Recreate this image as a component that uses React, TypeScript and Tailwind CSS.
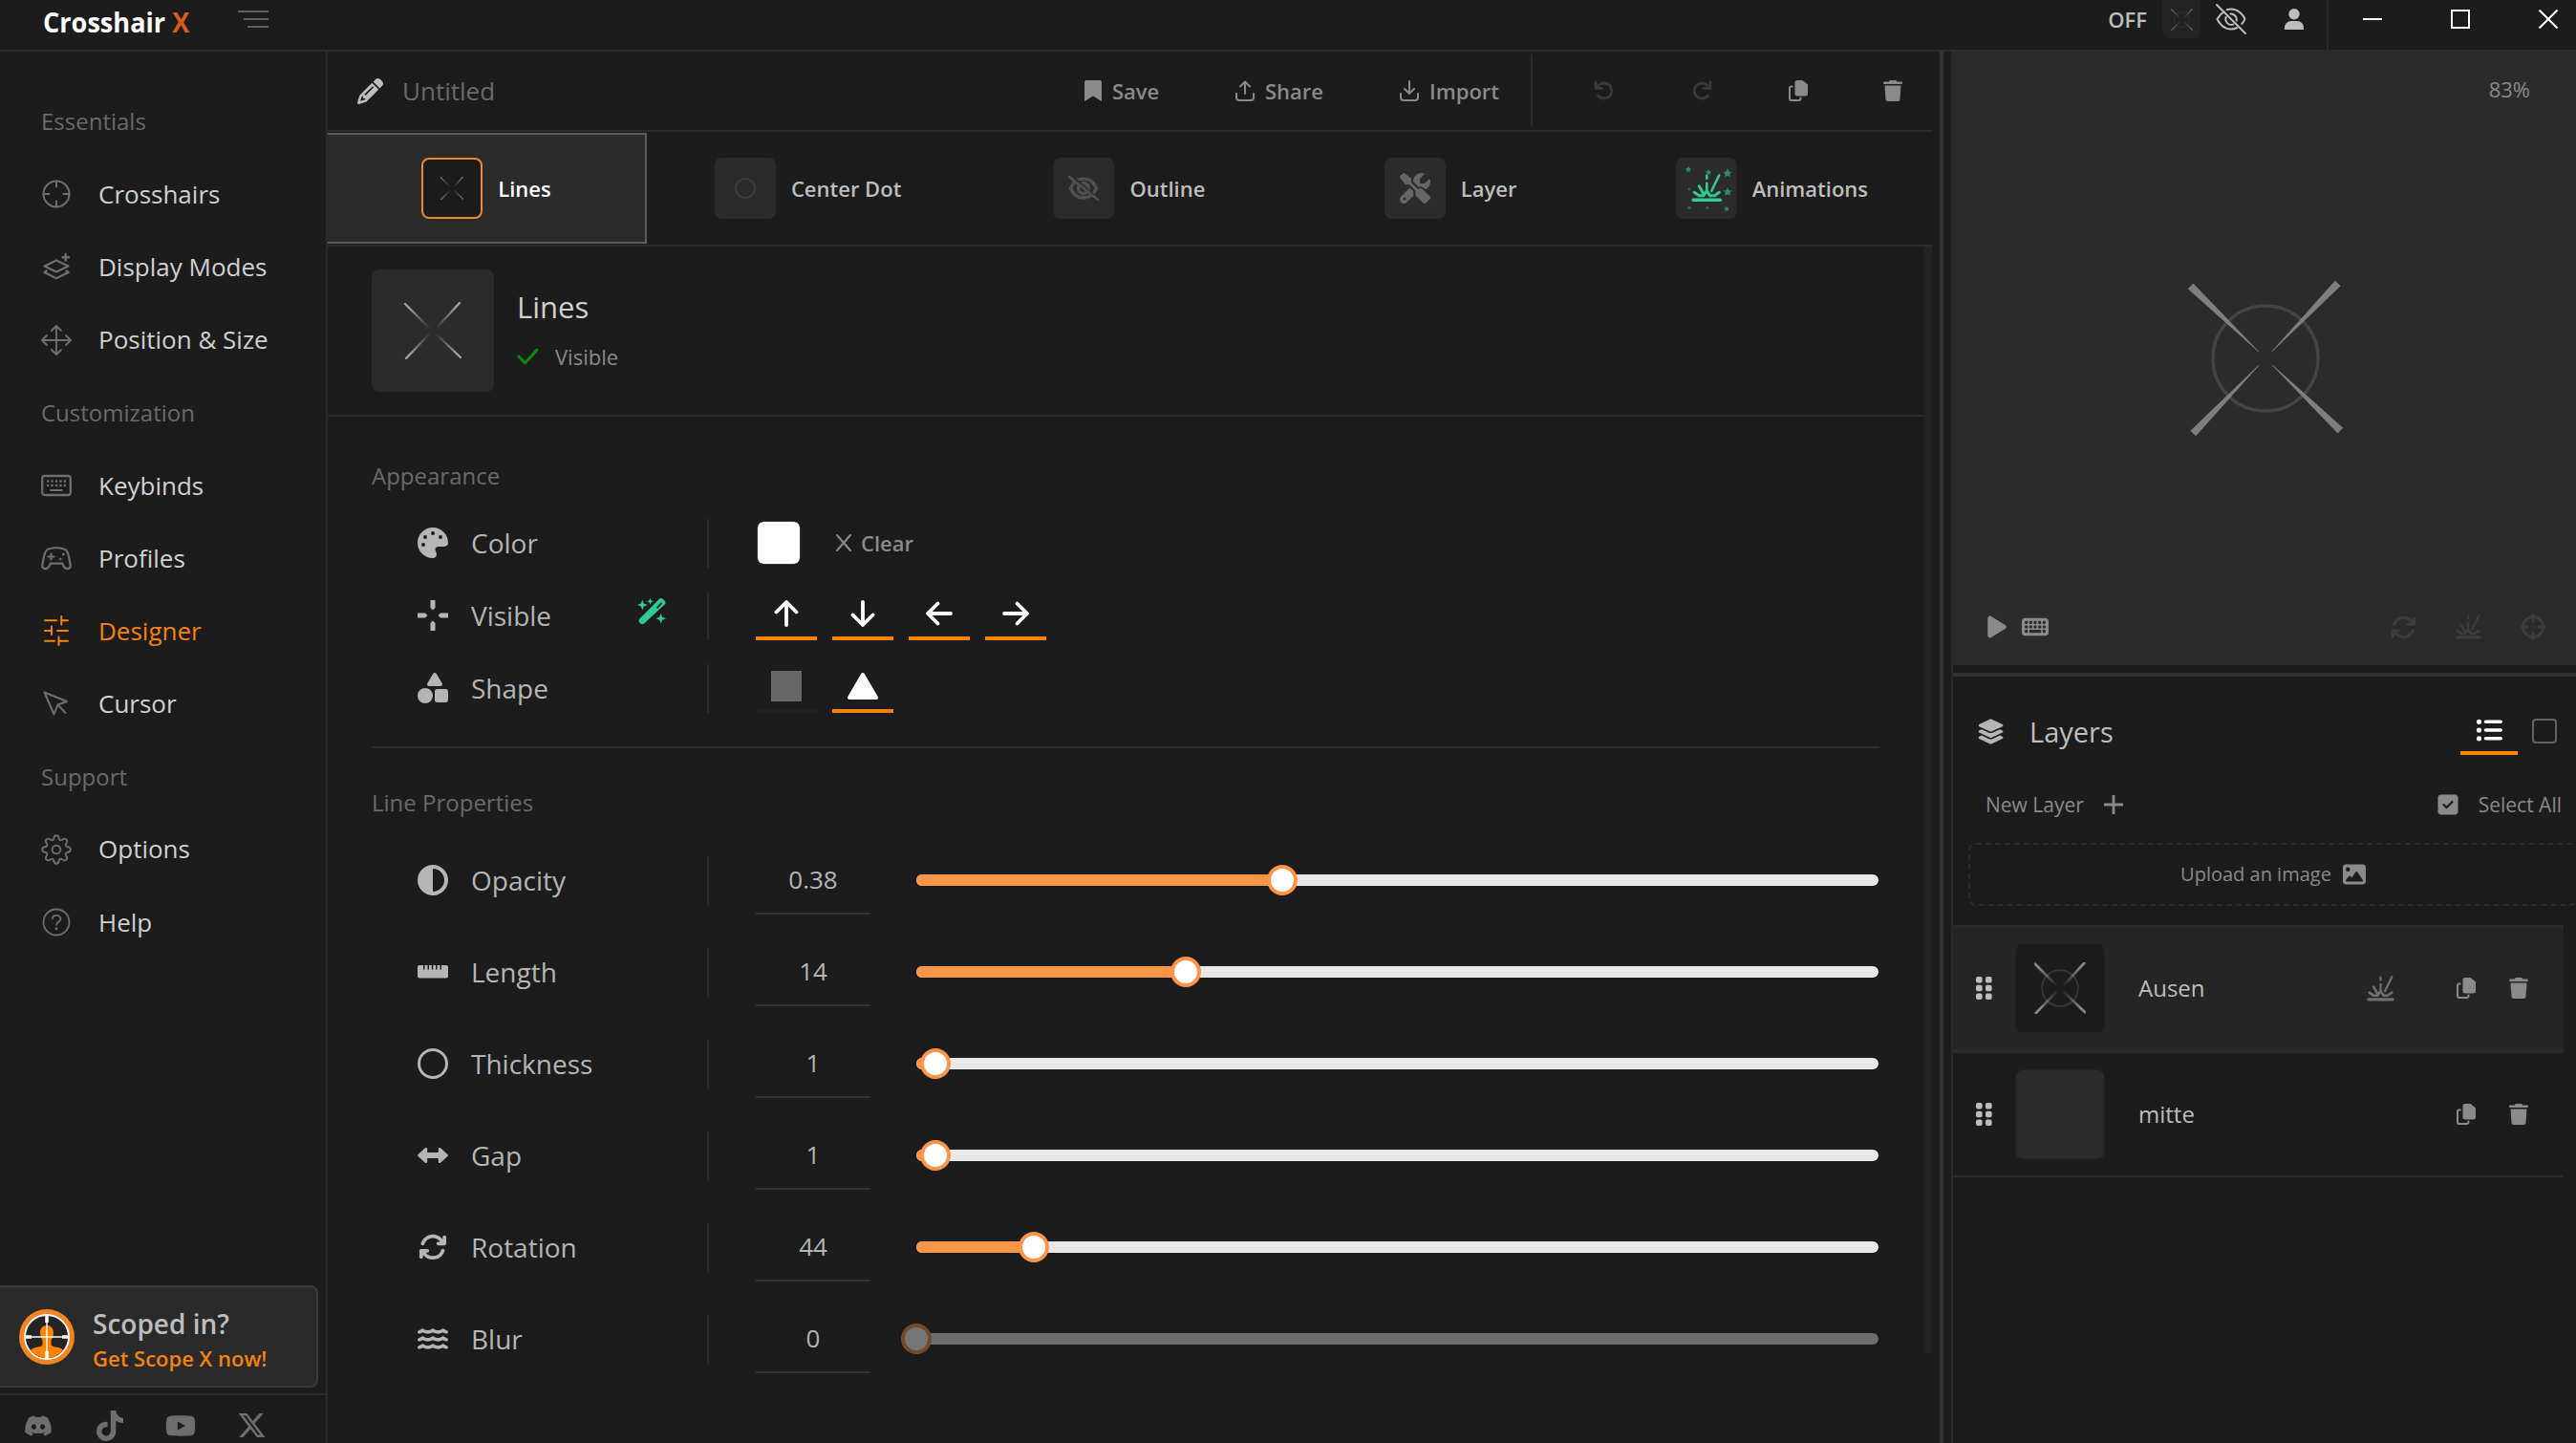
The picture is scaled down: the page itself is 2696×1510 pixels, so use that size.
import React from "react";
import {
  FaArrowsRotate,
  FaCircleHalfStroke,
  FaDiscord,
  FaImage,
  FaKeyboard,
  FaLayerGroup,
  FaListUl,
  FaPalette,
  FaPencil,
  FaPlay,
  FaScrewdriverWrench,
  FaShapes,
  FaSquareCheck,
  FaTiktok,
  FaWater,
  FaXTwitter,
  FaYoutube,
} from "react-icons/fa6";

type IconProps = { className?: string };

const line = {
  fill: "none",
  stroke: "currentColor",
  strokeWidth: 2,
  strokeLinecap: "round" as const,
  strokeLinejoin: "round" as const,
};

/* ---------- sidebar icons ---------- */

const CrosshairIcon = () => (
  <svg viewBox="0 0 32 32" className="size-8" {...line}>
    <circle cx="16" cy="16" r="13.5" />
    <path d="M16 2.5v6M16 23.5v6M2.5 16h6M23.5 16h6" />
  </svg>
);

const ModesIcon = () => (
  <svg viewBox="0 0 32 32" className="size-8" {...line} strokeWidth={2.4}>
    <path d="M16 9.5 28.500 15.500 16 21.5 3.500 15.500z" />
    <path d="M5.500 20.600 3.500 22 16 28.300 28.500 22l-2-1.400" />
    <path d="M25.700 3v6.500M22.500 6.200H29" />
  </svg>
);

const MoveIcon = () => (
  <svg viewBox="0 0 32 32" className="size-8" {...line} strokeWidth={1.9}>
    <path d="M16 1.500v29M1.500 16h29M11 6l5-5 5 5M11 26l5 5 5-5M6 11l-5 5 5 5M26 11l5 5-5 5" />
  </svg>
);

const KeyboardIcon = () => (
  <svg viewBox="0 0 32 32" className="size-8" {...line}>
    <rect x="1.200" y="6" width="29.600" height="20" rx="2.500" strokeWidth="2.300" />
    <path
      d="M6 11.500h2.200M10.400 11.500h2.200M14.900 11.500h2.200M19.400 11.500h2.200M23.800 11.500H26M6 16h2.200M10.400 16h2.200M14.900 16h2.200M19.400 16h2.200M23.800 16H26"
      strokeLinecap="butt"
      strokeWidth="2.300"
    />
    <path d="M10 21h12" />
  </svg>
);

const GamepadIcon = () => (
  <svg viewBox="0 0 32 32" className="size-8" {...line} strokeWidth={2.2}>
    <path d="M8 6.500Q16 4 24 6.500c2.500.5 4 3 5 8s1.800 9 1.800 9c0 2.500-1.500 3.700-3.300 3.700-2 0-3.200-1.200-4-3l-1.200-2.500H9.700L8.500 24.200c-.8 1.800-2 3-4 3-1.800 0-3.300-1.200-3.300-3.700 0 0 .8-4 1.800-9s2.500-7.500 5-8z" />
    <path d="M10.500 11.500v6M7.500 14.500h6" />
    <circle cx="23.300" cy="12" r="1" fill="currentColor" strokeWidth="1" />
    <circle cx="20" cy="17" r="1" fill="currentColor" strokeWidth="1" />
  </svg>
);

const SlidersIcon = () => (
  <svg viewBox="0 0 32 32" className="size-8" {...line}>
    <path d="M4 5.300h12M21.300 1v8.500M21.300 5.300H28M4 16h7M11 11.500V20M17 16h11M4 26.700h10M18.500 22.500V31M18.500 26.700H28" />
  </svg>
);

const CursorIcon = () => (
  <svg viewBox="0 0 32 32" className="size-8" {...line} strokeLinecap="butt">
    <path d="M3.500 3.500 27 13l-9.500 3.500-4 10z" />
    <path d="m18.500 17.500 7.500 8" />
  </svg>
);

const GearIcon = () => (
  <svg viewBox="0 0 32 32" className="size-8" {...line} strokeWidth={1.9}>
    <path d="M13.200 4.500c.3-2.200 1.200-3.300 2.800-3.300s2.500 1.100 2.800 3.300c.3 1.600 1.800 2.200 3.200 1.300 1.800-1.400 3.300-1.500 4.400-.4s1 2.600-.3 4.400c-.9 1.300-.2 2.900 1.400 3.200 2.200.3 3.300 1.400 3.300 3s-1.100 2.700-3.300 3c-1.600.3-2.300 1.900-1.400 3.200 1.300 1.800 1.400 3.300.3 4.400s-2.600 1-4.400-.4c-1.400-.9-2.900-.3-3.200 1.300-.3 2.200-1.200 3.300-2.800 3.300s-2.500-1.100-2.800-3.300c-.3-1.600-1.800-2.200-3.200-1.300-1.800 1.400-3.300 1.500-4.400.4s-1-2.600.3-4.400c.9-1.300.2-2.900-1.400-3.200-2.200-.3-3.300-1.400-3.300-3s1.100-2.700 3.300-3c1.600-.3 2.300-1.900 1.400-3.200-1.300-1.800-1.400-3.300-.3-4.400s2.600-1 4.400.4c1.400.9 2.900.3 3.200-1.300z" />
    <circle cx="16" cy="16" r="4.300" />
  </svg>
);

const HelpIcon = () => (
  <svg viewBox="0 0 32 32" className="size-8" {...line} strokeWidth={1.8}>
    <circle cx="16" cy="16" r="13.500" />
    <path d="M11.700 12.500c.3-2.300 2-3.700 4.300-3.700 2.500 0 4.400 1.500 4.400 3.800 0 3-4.400 3.300-4.400 6.200" />
    <circle cx="16" cy="22.700" r=".6" fill="currentColor" />
  </svg>
);

const ScopeLogo = () => (
  <svg viewBox="0 0 58 58" className="size-[58px]">
    <circle cx="29" cy="29" r="29" fill="#f5831f" />
    <circle cx="29" cy="29" r="23" fill="#242424" stroke="#fff" strokeWidth="1.800" />
    <path
      d="M29 17c4.500 0 7 3.300 7 7.500 0 3-1.500 6-2.500 8v3.500c0 3 3 3.500 7 4 3 .5 4.500 1.500 5.500 3a22 22 0 0 1-34 0c1-1.500 2.500-2.500 5.500-3 4-.5 7-1 7-4v-3.500c-1-2-2.500-5-2.500-8 0-4.200 2.500-7.500 7-7.500z"
      fill="#ff8300"
    />
    <path d="M29 6v46M6 29h46" stroke="#fff" strokeWidth="1.400" />
    <path d="M29 7v7M29 44v7M6 29h7M45 29h7" stroke="#fff" strokeWidth="3.500" />
  </svg>
);

/* ---------- shared icons ---------- */

const CopyIcon = ({ className }: IconProps) => (
  <svg viewBox="0 0 20 22" className={className} fill="currentColor">
    <path d="M9 0h5.500L20 4.500V14a2.500 2.500 0 0 1-2.500 2.500H9A2.500 2.500 0 0 1 6.500 14V2.500A2.500 2.500 0 0 1 9 0z" />
    <path
      d="M4.500 6.500H2.700A1.700 1.700 0 0 0 1 8.200v11A1.700 1.700 0 0 0 2.700 21h8a1.700 1.700 0 0 0 1.700-1.700v-1.500"
      fill="none"
      stroke="currentColor"
      strokeWidth="2"
    />
  </svg>
);

const TrashIcon = ({ className }: IconProps) => (
  <svg viewBox="0 0 20 22" className={className} fill="currentColor">
    <path d="M6.700 0h6.600l.9 1.400h4.600c.7 0 1.200.5 1.200 1.300s-.5 1.400-1.200 1.400H1.200C.5 4.100 0 3.500 0 2.700s.5-1.300 1.200-1.300h4.600zM1.500 5.500h17l-1 14.500a2.100 2.100 0 0 1-2.100 2H4.600a2.100 2.100 0 0 1-2.100-2z" />
  </svg>
);

const BurstPaths = () => (
  <>
    <path d="M2 28.500h28" strokeWidth="3.600" />
    <path d="M16 3v3M16 11v9M29 2.500 21 19" strokeWidth="2.600" />
    <path d="M8 14l4.500 8M2.800 20.500 8 24h4.500l3.500-5 3.500 5H24l5-3.500" strokeWidth="3" />
  </>
);

const BurstIcon = ({ className }: IconProps) => (
  <svg viewBox="0 0 32 32" className={className} {...line}>
    <BurstPaths />
  </svg>
);

const WandIcon = () => (
  <svg viewBox="0 0 30 28" className="h-7 w-[30px]" fill="currentColor">
    <path
      d="M22.500 1.200 2.500 21.500a3 3 0 0 0 0 4.200l.6.600a3 3 0 0 0 4.200 0L28.500 6.800a3 3 0 0 0 0-4.200l-1.400-1.400a3.200 3.200 0 0 0-4.600 0zM20 9.500l5-5.300 1.200 1.200-4.900 5.500z"
      fillRule="evenodd"
    />
    <path d="m5.300 1.500 1.500 4 4 1.500-4 1.500-1.500 4-1.500-4L0 7l3.800-1.500zM13.500 0l1 2.300 2.500 1-2.500 1-1 2.500-1-2.500-2.500-1 2.500-1zM24.700 16l1.400 3.700 3.900 1.500-3.900 1.500-1.400 3.800-1.400-3.800-3.800-1.500 3.800-1.500z" />
  </svg>
);

const RulerIcon = () => (
  <svg viewBox="0 0 32 32" className="size-8" fill="currentColor">
    <path d="M2 9h4v4.500h1.500V9h3v4.500H12V9h2.800v4.500h1.500V9H19v4.500h1.500V9h3v4.500H25V9h5a2 2 0 0 1 2 2v9.500a2 2 0 0 1-2 2H2a2 2 0 0 1-2-2V11a2 2 0 0 1 2-2z" />
  </svg>
);

const GapIcon = () => (
  <svg viewBox="0 0 32 32" className="size-8" fill="currentColor">
    <path d="m.6 15 7.400-6.700c1-.8 2.200-.2 2.200 1V13h11.600V9.300c0-1.200 1.200-1.800 2.200-1l7.400 6.700c.7.600.7 1.400 0 2L24 23.700c-1 .8-2.200.2-2.200-1V19H10.200v3.700c0 1.200-1.200 1.800-2.200 1L.6 17c-.7-.6-.7-1.400 0-2z" />
  </svg>
);

const PlusGapIcon = () => (
  <svg viewBox="0 0 32 32" className="size-8" fill="currentColor">
    <path d="M13.500 0h5v8L16 10.500 13.500 8zM13.500 32h5v-8L16 21.500 13.500 24zM0 13.500v5h8l2.500-2.500L8 13.500zM32 13.500v5h-8L21.500 16l2.500-2.500z" />
  </svg>
);

const EyeSlashIcon = ({ className }: IconProps) => (
  <svg viewBox="0 0 32 32" className={className} {...line}>
    <path d="M8.500 8.200C5 10.600 2.500 14 1.500 16c2 4.500 7 10.500 14.500 10.500 2.300 0 4.500-.6 6.300-1.500M11.500 6.200C13 5.700 14.500 5.500 16 5.500c7.500 0 12.500 6 14.500 10.500-.6 1.500-1.700 3.200-3.200 4.900" />
    <path d="M10.600 14a6 6 0 0 0 7.500 7.600M15.500 10.500a6 6 0 0 1 6.200 7M1 1l30 30" />
  </svg>
);

const TargetIcon = ({ className }: IconProps) => (
  <svg viewBox="0 0 28 28" className={className} {...line} strokeWidth={3}>
    <circle cx="14" cy="14" r="10.500" />
    <path d="M14 2v6M14 20v6M2 14h6M20 14h6" />
    <circle cx="14" cy="14" r=".5" />
  </svg>
);

const ArrowIcon = ({ turn }: { turn: string }) => (
  <svg viewBox="0 0 28 28" className={`size-7 ${turn}`} {...line} strokeWidth={3.8}>
    <path d="M14 26V2.500M3.500 12.500 14 2l10.500 10.500" />
  </svg>
);

type SightProps = {
  className?: string;
  lines?: string;
  ring?: string;
  width?: number;
};

// small version of the sight: four strokes fading to the middle, plus optional ring
const Sight = ({ className, lines = "#8a8a8a", ring, width = 3 }: SightProps) => {
  const id = `fade${lines.slice(1)}${width * 10}`;
  return (
    <svg viewBox="0 0 60 60" className={className} fill="none">
      <defs>
        <radialGradient id={id} gradientUnits="userSpaceOnUse" cx="30" cy="30" r="38">
          <stop offset="0.1" stopColor={lines} stopOpacity="0" />
          <stop offset="0.9" stopColor={lines} />
        </radialGradient>
      </defs>
      {ring && <circle cx="30" cy="30" r="21" stroke={ring} strokeWidth="2" />}
      <path
        d="M1 2l25 25M58 1 34 27M2 59l24-25M59 58 34 34"
        stroke={`url(#${id})`}
        strokeWidth={width}
        strokeLinecap="round"
      />
    </svg>
  );
};

/* ---------- data ---------- */

const menu = [
  { title: "Essentials" },
  { label: "Crosshairs", icon: <CrosshairIcon /> },
  { label: "Display Modes", icon: <ModesIcon /> },
  { label: "Position & Size", icon: <MoveIcon /> },
  { title: "Customization" },
  { label: "Keybinds", icon: <KeyboardIcon /> },
  { label: "Profiles", icon: <GamepadIcon /> },
  { label: "Designer", icon: <SlidersIcon />, active: true },
  { label: "Cursor", icon: <CursorIcon /> },
  { title: "Support" },
  { label: "Options", icon: <GearIcon /> },
  { label: "Help", icon: <HelpIcon /> },
];

const properties = [
  { label: "Opacity", value: "0.38", percent: 38, icon: <FaCircleHalfStroke className="size-8" /> },
  { label: "Length", value: "14", percent: 28, icon: <RulerIcon /> },
  {
    label: "Thickness",
    value: "1",
    percent: 2,
    icon: (
      <svg viewBox="0 0 32 32" className="size-8" {...line} strokeWidth={3}>
        <circle cx="16" cy="16" r="14.500" />
      </svg>
    ),
  },
  { label: "Gap", value: "1", percent: 2, icon: <GapIcon /> },
  { label: "Rotation", value: "44", percent: 12.2, icon: <FaArrowsRotate className="size-[30px]" /> },
  { label: "Blur", value: "0", percent: 0, disabled: true, icon: <FaWater className="size-8" /> },
];

/* ---------- layout parts ---------- */

const Header = () => (
  <header className="flex h-[54px] shrink-0 border-b-2 border-[#2b2b2b]">
    <div className="flex w-[249px] shrink-0 pt-[3px] pl-[45px]">
      <h1 className="origin-left scale-x-[0.935] text-[29px] leading-10 font-bold whitespace-nowrap text-white">
        Crosshair <span className="text-[#d95b20]">X</span>
      </h1>
    </div>
    <div className="flex w-8 flex-col items-end gap-1.5 pt-[11px]">
      <div className="h-0.5 w-8 bg-[#5e5e5e]" />
      <div className="h-0.5 w-[26px] bg-[#5e5e5e]" />
      <div className="h-0.5 w-[22px] bg-[#5e5e5e]" />
    </div>
    <div className="ml-auto flex h-10 items-center">
      <span className="mr-4 text-[22px] font-semibold text-[#bdbdbd]">OFF</span>
      <div className="flex size-10 items-center justify-center rounded-b-md bg-[#232323]">
        <Sight className="size-[23px]" lines="#555555" ring="#333333" width={4} />
      </div>
      <EyeSlashIcon className="ml-4 size-8 text-[#bdbdbd]" />
      <svg viewBox="0 0 20 22" className="ml-10 h-[22px] w-5 text-[#bdbdbd]" fill="currentColor">
        <circle cx="10" cy="5.700" r="5.700" />
        <path d="M0 22v-2c0-4 3-7 7-7h6c4 0 7 3 7 7v2z" />
      </svg>
    </div>
    <div className="ml-6 flex w-[261px] items-start border-l-2 border-[#2b2b2b] pt-2.5 pl-[36px]">
      <div className="mt-[9px] h-0.5 w-5 bg-white" />
      <div className="ml-[72px] size-5 border-2 border-white" />
      <svg viewBox="0 0 20 20" className="ml-[72px] size-5" stroke="#fff" strokeWidth="2">
        <path d="M.5.5l19 19M19.500.5l-19 19" />
      </svg>
    </div>
  </header>
);

const Sidebar = () => (
  <aside className="flex w-[343px] shrink-0 flex-col border-r-2 border-[#2b2b2b] pt-[35px]">
    {menu.map((item) =>
      item.title ? (
        <div key={item.title} className="flex h-[76.2px] items-center pl-[43px] text-[24px] text-[#6a6a6a]">
          {item.title}
        </div>
      ) : (
        <div
          key={item.label}
          className={`flex h-[76.2px] items-center gap-[28px] pl-[43px] text-[26px] ${item.active ? "text-[#f5820f]" : "text-[#6e6e6e]"}`}
        >
          {item.icon}
          <span className={item.active ? "" : "text-[#d0d0d0]"}>{item.label}</span>
        </div>
      ),
    )}
    <div className="mt-auto mr-2 flex h-[107px] items-center gap-[19px] rounded-r-lg border-y-2 border-r-2 border-[#3a3a3a] bg-[#2a2a2a] pl-5">
      <ScopeLogo />
      <div className="pt-1.5 font-semibold">
        <div className="text-[28px] leading-[38px] text-[#bdbdbd]">Scoped in?</div>
        <div className="text-[22px] leading-[34px] text-[#f5820f]">Get Scope X now!</div>
      </div>
    </div>
    <div className="mt-1.5 flex h-[52px] shrink-0 border-t-2 border-[#2b2b2b] pt-4 pl-[25px] text-[#6e6e6e]">
      <FaDiscord className="h-8 w-[30px]" />
      <FaTiktok className="ml-[44px] size-8" />
      <FaYoutube className="ml-[42px] size-8" />
      <FaXTwitter className="ml-[43px] size-[31px]" />
    </div>
  </aside>
);

const Toolbar = () => (
  <div className="flex h-[84px] w-[1679px] shrink-0 items-center border-b-2 border-[#2b2b2b] pl-[31px] text-[22px] font-semibold text-[#8a8a8a]">
    <FaPencil className="size-[27px] text-[#bdbdbd]" />
    <span className="ml-[20px] w-[714px] text-[26px] font-normal text-[#6a6a6a]">Untitled</span>
    <div className="flex w-[158px] items-center gap-[11px]">
      <svg viewBox="0 0 18 22" className="h-[22px] w-[18px]" fill="currentColor">
        <path d="M2 0h14a2 2 0 0 1 2 2v20l-9-5.500L0 22V2a2 2 0 0 1 2-2z" />
      </svg>
      Save
    </div>
    <div className="flex w-[172px] items-center gap-[11px]">
      <svg viewBox="0 0 20 22" className="h-[22px] w-5" {...line}>
        <path d="M10 14V1.500M5 6.500l5-5 5 5M1 14v4a3 3 0 0 0 3 3h12a3 3 0 0 0 3-3v-4" />
      </svg>
      Share
    </div>
    <div className="flex w-[137px] items-center gap-[11px]">
      <svg viewBox="0 0 20 22" className="h-[22px] w-5" {...line}>
        <path d="M10 1v13M5 9l5 5 5-5M1 14v4a3 3 0 0 0 3 3h12a3 3 0 0 0 3-3v-4" />
      </svg>
      Import
    </div>
    <div className="h-[76px] w-0.5 bg-[#2b2b2b]" />
    <svg viewBox="0 0 22 22" className="ml-[64px] size-[22px] text-[#393939]" {...line} strokeWidth={2.8}>
      <path d="M2 2v6.500h6.500M3 8c2-3.500 5-5 8-5a8 8 0 1 1-6.500 13" />
    </svg>
    <svg viewBox="0 0 22 22" className="ml-[80px] size-[22px] text-[#393939]" {...line} strokeWidth={2.8}>
      <path d="M20 2v6.500h-6.500M19 8c-2-3.500-5-5-8-5a8 8 0 1 0 6.500 13" />
    </svg>
    <CopyIcon className="ml-20 h-[22px] w-5" />
    <TrashIcon className="ml-[79px] h-[22px] w-5" />
  </div>
);

type TabProps = { label: string; active?: boolean; children: React.ReactNode };

const Tab = ({ label, active, children }: TabProps) => (
  <div
    className={`flex items-center justify-center gap-4 text-[22px] font-semibold ${active ? "w-[334px] border-2 border-l-0 border-[#5a5c60] bg-[#2b2b2b] text-white" : "flex-1 pl-px text-[#bdbdbd]"}`}
  >
    <div
      className={`flex size-16 items-center justify-center rounded-lg ${active ? "border-2 border-[#ee8a26] bg-[#1c1c1c]" : "bg-[#2b2b2b]"}`}
    >
      {children}
    </div>
    {label}
  </div>
);

const Tabs = () => (
  <div className="flex h-[120px] w-[1679px] shrink-0 border-b-2 border-[#2b2b2b] pt-px pb-px">
    <Tab label="Lines" active>
      <Sight className="size-6" lines="#606060" width={4} />
    </Tab>
    <Tab label="Center Dot">
      <div className="size-[22px] rounded-full border-2 border-[#3b3b3b]" />
    </Tab>
    <Tab label="Outline">
      <svg viewBox="0 0 32 26" className="h-[26px] w-8 text-[#505050]" {...line} strokeWidth={3.4}>
        <path d="M2.500 13C5 7 10 3 16 3s11 4 13.500 10C27 19 22 23 16 23S5 19 2.500 13z" />
        <circle cx="16" cy="13" r="5.500" />
        <path d="M15 10.500c2 .2 3 1.500 3 3" />
        <path d="M3 0l29 25" stroke="#2b2b2b" strokeWidth="3" />
        <path d="M1 1l30 24" strokeWidth="2.500" />
      </svg>
    </Tab>
    <Tab label="Layer">
      <FaScrewdriverWrench className="size-8 text-[#666]" />
    </Tab>
    <Tab label="Animations">
      <svg viewBox="0 0 64 64" className="size-16 text-[#2ecc8f]" {...line}>
        <g transform="translate(16.300 15.800)">
          <BurstPaths />
        </g>
        <path
          d="m13 9 1 2 2.200.4-1.600 1.600.4 2.200-2-1-2 1 .4-2.200-1.600-1.600 2.200-.4zM34 12l1 2 2.200.4-1.600 1.600.4 2.200-2-1-2 1 .4-2.200-1.600-1.600 2.200-.4zM54 11.500l1.400 2.900 3.200.5-2.300 2.200.5 3.200-2.800-1.500-2.900 1.500.6-3.200-2.300-2.200 3.200-.5zM54 31l1.400 2.900 3.200.5-2.300 2.200.5 3.200-2.800-1.500-2.900 1.500.6-3.200-2.300-2.200 3.200-.5zM53 50.500l.9 1.800 1.900.3-1.300 1.400.3 1.900-1.800-.9-1.700.9.300-1.900-1.400-1.400 2-.3z"
          fill="currentColor"
          stroke="none"
          opacity=".6"
        />
        <g fill="currentColor" stroke="none" opacity=".4">
          <circle cx="14" cy="33" r="1.200" />
          <circle cx="14" cy="52.500" r="1.500" />
          <circle cx="33" cy="52.500" r="1.500" />
        </g>
      </svg>
    </Tab>
  </div>
);

type FieldProps = {
  label: string;
  icon: React.ReactNode;
  badge?: React.ReactNode;
  children: React.ReactNode;
};

const Field = ({ label, icon, badge, children }: FieldProps) => (
  <div className="flex h-full items-center">
    <div className="flex w-[351px] shrink-0 items-center pl-12">
      <div className="flex w-8 justify-center text-[#b5b5b5]">{icon}</div>
      <span className="ml-6 text-[28px] leading-10 text-[#b5b5b5]">{label}</span>
      {badge}
    </div>
    <div className="h-[51px] w-0.5 shrink-0 bg-[#2b2b2b]" />
    {children}
  </div>
);

const Slider = ({ percent, disabled }: { percent: number; disabled?: boolean }) => (
  <div
    className={`relative ml-12 h-3 w-[1007px] rounded-full bg-[#e8e8e8] ${disabled ? "opacity-40" : ""}`}
  >
    <div className="h-3 rounded-full bg-[#fc9547]" style={{ width: `${percent}%` }} />
    <div
      className="absolute -top-2.5 -ml-4 size-8 rounded-full border-4 border-[#fc9547] bg-white"
      style={{ left: `${percent}%` }}
    />
  </div>
);

const Designer = () => (
  <div className="flex flex-1 overflow-hidden">
    <div className="w-[1671px]">
      <div className="flex h-[178px] items-center border-b-2 border-[#2b2b2b] pl-[46px]">
        <div className="flex size-32 items-center justify-center rounded-lg bg-[#2b2b2b]">
          <Sight className="size-[60px]" lines="#a0a0a0" width={2.4} />
        </div>
        <div className="ml-6">
          <div className="text-[31px] leading-[42px] text-[#d0d0d0]">Lines</div>
          <div className="mt-[11px] flex items-center gap-[17px] text-[22px] leading-[40px] text-[#8a8a8a]">
            <svg viewBox="0 0 23 18" className="h-[18px] w-[23px] text-[#0b8a0b]" {...line} strokeWidth={3}>
              <path d="m2 9 6.500 7L21 2" />
            </svg>
            Visible
          </div>
        </div>
      </div>

      <section className="ml-[46px] w-[1578px] border-b-2 border-[#2b2b2b] pt-[42px] pb-[23px]">
        <h2 className="h-[52px] text-[24px] leading-10 text-[#6a6a6a]">Appearance</h2>
        <div className="h-[76px]">
          <Field label="Color" icon={<FaPalette className="size-8" />}>
            <div className="ml-[51px] size-11 rounded-md bg-white outline outline-[#333]" />
            <svg viewBox="0 0 16 18" className="ml-[38px] h-[18px] w-4 text-[#8a8a8a]" {...line} strokeWidth={2}>
              <path d="M1 1l14 16M15 1 1 17" />
            </svg>
            <span className="ml-2.5 text-[22px] font-semibold text-[#8a8a8a]">Clear</span>
          </Field>
        </div>
        <div className="h-[76px]">
          <Field
            label="Visible"
            icon={<PlusGapIcon />}
            badge={
              <span className="mr-[43px] mb-2 ml-auto text-[#2ecc8f]">
                <WandIcon />
              </span>
            }
          >
            <div className="ml-[49px] flex gap-4 text-white">
              {["", "rotate-180", "-rotate-90", "rotate-90"].map((turn) => (
                <div key={turn} className="flex h-[51px] w-16 items-center justify-center border-b-4 border-[#ff8300]">
                  <ArrowIcon turn={turn} />
                </div>
              ))}
            </div>
          </Field>
        </div>
        <div className="h-[76px]">
          <Field label="Shape" icon={<FaShapes className="size-8" />}>
            <div className="ml-[49px] flex gap-4">
              <div className="flex h-[51px] w-16 items-center justify-center border-b-4 border-[#202020]">
                <div className="size-8 bg-[#676767]" />
              </div>
              <div className="flex h-[51px] w-16 items-center justify-center border-b-4 border-[#ff8300]">
                <svg viewBox="0 0 32 28" className="h-7 w-8" fill="#fff" stroke="#fff" strokeWidth="4" strokeLinejoin="round">
                  <path d="M16 2 30 26H2z" />
                </svg>
              </div>
            </div>
          </Field>
        </div>
      </section>

      <section className="ml-[46px] w-[1578px] pt-[37px]">
        <h2 className="h-[53px] text-[24px] leading-10 text-[#6a6a6a]">Line Properties</h2>
        {properties.map((item) => (
          <div key={item.label} className="h-24">
            <Field label={item.label} icon={item.icon}>
              <div className="ml-[49px] flex h-[71px] w-[120px] shrink-0 items-center justify-center border-b-2 border-[#333] text-[26px] text-[#b5b5b5]">
                {item.value}
              </div>
              <Slider percent={item.percent} disabled={item.disabled} />
            </Field>
          </div>
        ))}
      </section>
    </div>
    <div className="h-[1158px] w-2 bg-[#232323]" />
  </div>
);

const Preview = () => (
  <div className="-mt-0.5 flex h-[644px] flex-col bg-[#2b2b2b]">
    <div className="flex h-[223px] justify-end pt-[25px] pr-[48px] text-[22px] text-[#8a8a8a]">83%</div>
    <div className="flex justify-center pl-1">
      <svg viewBox="-100 -100 200 200" className="size-[200px] shrink-0 overflow-visible">
        <circle r="55" fill="none" stroke="#444" strokeWidth="3.500" />
        {[44, 134, 224, 314].map((angle) => (
          <path key={angle} d="M-4-109h8L.3-10h-.6z" fill="#7e7e7e" transform={`rotate(${angle})`} />
        ))}
      </svg>
    </div>
    <div className="mt-auto mb-[26px] flex items-center pr-[31px] pl-[37px]">
      <FaPlay className="h-[26px] w-[22px] text-[#8a8a8a]" />
      <FaKeyboard className="ml-[15px] size-7 text-[#8a8a8a]" />
      <div className="ml-auto flex items-center gap-10 text-[#3c3c3c]">
        <FaArrowsRotate className="size-[27px]" />
        <BurstIcon className="size-7" />
        <TargetIcon className="size-7" />
      </div>
    </div>
  </div>
);

type LayerProps = { name: string; selected?: boolean; children?: React.ReactNode };

const Layer = ({ name, selected, children }: LayerProps) => (
  <div
    className={`flex h-[132px] w-[639px] items-center border-y-2 border-[#2b2b2b] pl-[24px] ${selected ? "bg-[#252525]" : ""}`}
  >
    <svg viewBox="0 0 17 24" className="h-6 w-[17px]" fill="#bdbdbd">
      {[0, 8.8, 17.6].map((y) => (
        <g key={y}>
          <rect x="0" y={y} width="6.600" height="6.400" rx="2" />
          <rect x="10" y={y} width="6.600" height="6.400" rx="2" />
        </g>
      ))}
    </svg>
    <div
      className={`ml-6 flex size-[94px] items-center justify-center rounded-lg border border-[#232323] ${selected ? "bg-[#1c1c1c]" : "bg-[#2b2b2b]"}`}
    >
      {children}
    </div>
    <span className="ml-[35px] text-[24px] text-[#bdbdbd]">{name}</span>
    <div className="mr-[37px] ml-auto flex items-center text-[#8a8a8a]">
      {selected && <BurstIcon className="mr-[65px] size-[29px] text-[#6e6e6e]" />}
      <CopyIcon className="h-[22px] w-5" />
      <TrashIcon className="ml-[35px] h-[22px] w-5" />
    </div>
  </div>
);

const LayersPanel = () => (
  <div className="flex flex-1 flex-col border-l-2 border-[#2b2b2b] pt-2">
    <div className="h-1 bg-[#333]" />
    <div className="mt-[36px] flex h-[46px] items-center pl-[25px]">
      <FaLayerGroup className="mb-1 size-[29px] text-[#b5b5b5]" />
      <h2 className="mb-0.5 ml-[26px] text-[29px] font-medium text-[#bdbdbd]">Layers</h2>
      <div className="ml-auto flex h-[46px] w-[60px] justify-center border-b-4 border-[#ff8300] pt-1.5">
        <FaListUl className="size-7 text-white" />
      </div>
      <div className="mr-5 mb-[5px] ml-[15px] size-[26px] rounded-[4px] border-[2.5px] border-[#5d646b]" />
    </div>
    <div className="mt-[36px] flex h-8 items-center pl-[34px] text-[21px] font-medium text-[#8a8a8a]">
      <span className="pt-0.5">New Layer</span>
      <svg viewBox="0 0 20 20" className="ml-[21px] size-5" {...line} strokeWidth={2.8}>
        <path d="M10 1v18M1 10h18" />
      </svg>
      <FaSquareCheck className="mr-[20px] ml-auto size-6" />
      <span className="mr-[15px] pt-0.5">Select All</span>
    </div>
    <div className="mt-[24px] ml-4 flex h-[66px] w-[638px] shrink-0 items-center justify-center rounded-lg border-2 border-dashed border-[#2b2b2b] text-[20px] text-[#8a8a8a]">
      Upload an image
      <FaImage className="ml-3 size-6" />
    </div>
    <div className="mt-5">
      <Layer name="Ausen" selected>
        <Sight className="size-[54px]" lines="#8a8a8a" ring="#383838" width={3} />
      </Layer>
      <Layer name="mitte" />
    </div>
  </div>
);

const App = () => {
  return (
    <div className="flex h-[1510px] w-[2696px] flex-col overflow-hidden bg-[#1c1c1c] font-['Open_Sans','Noto_Sans',sans-serif]">
      <Header />
      <div className="flex flex-1">
        <Sidebar />
        <main className="flex w-[1687px] shrink-0 flex-col">
          <Toolbar />
          <Tabs />
          <Designer />
        </main>
        <div className="mr-2 w-1 shrink-0 bg-[#333]" />
        <div className="flex w-[654px] shrink-0 flex-col">
          <Preview />
          <LayersPanel />
        </div>
      </div>
    </div>
  );
};

export default App;
